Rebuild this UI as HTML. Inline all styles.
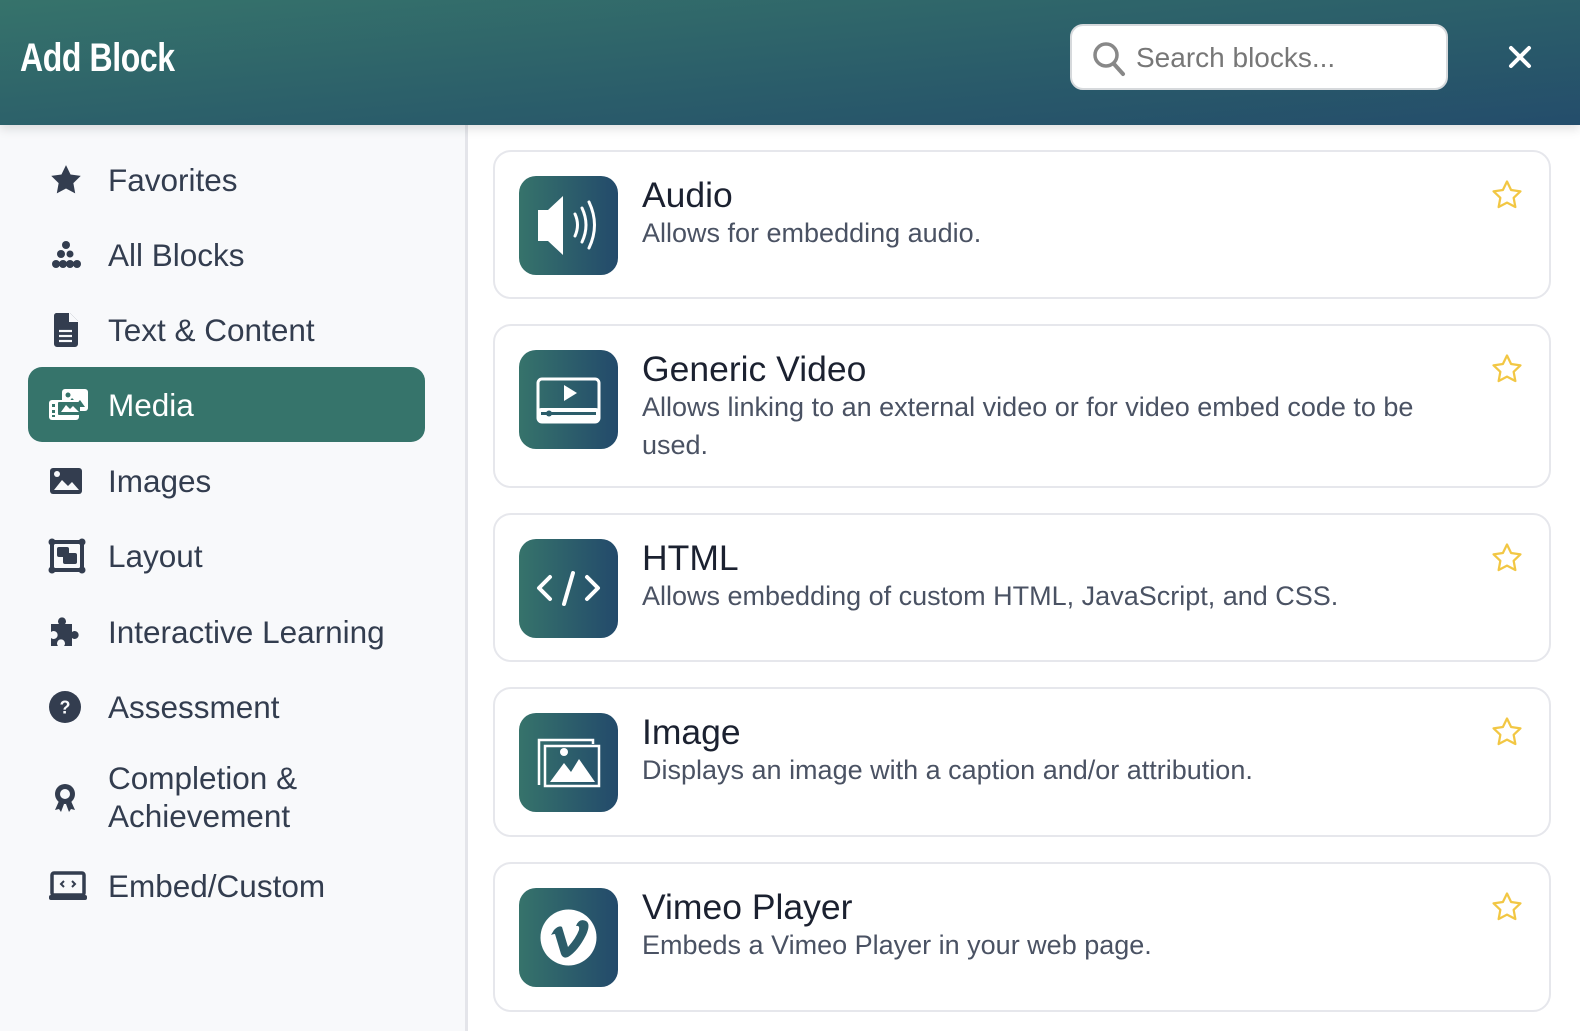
<!DOCTYPE html>
<html><head><meta charset="utf-8"><style>
*{box-sizing:border-box;margin:0;padding:0}
body{width:1580px;height:1031px;overflow:hidden;font-family:"Liberation Sans",sans-serif;background:#fff;position:relative}
.hdr{position:absolute;left:0;top:0;width:1580px;height:125px;background:linear-gradient(175deg,#36736b 0%,#2a5c6a 60%,#244d6b 100%);box-shadow:0 4px 10px rgba(0,0,0,.12);z-index:2}
.hdr h1{position:absolute;left:20px;top:36px;font-weight:bold;font-size:40px;color:#fff;letter-spacing:-0.5px;transform:scaleX(0.8);transform-origin:left;white-space:nowrap}
.search{position:absolute;left:1070px;top:24px;width:378px;height:66px;background:#fff;border:2px solid #d6d9dc;border-radius:13px}
.search span{position:absolute;left:64px;top:16px;font-size:28px;color:#777}
.search svg{position:absolute;left:20px;top:15px}
.close{position:absolute;left:1505px;top:42px}
.side{position:absolute;left:0;top:125px;width:468px;height:906px;background:#f8f9fb;border-right:3px solid #e4e5ea}
.item{position:absolute;left:28px;width:397px;height:75px;color:#333d4f;font-size:31.5px}
.item .t{position:absolute;left:80px;top:50%;transform:translateY(-50%);line-height:38px;white-space:nowrap}
.item svg{position:absolute;left:20px;top:50%;transform:translateY(-50%)}
.item.act{background:#36746b;border-radius:14px;color:#fff}
.card{position:absolute;left:493px;width:1058px;border:2px solid #e6e7ec;border-radius:18px;background:#fff}
.ic{position:absolute;left:24px;top:24px;width:99px;height:99px;border-radius:17px;background:linear-gradient(90deg,#36736b,#234a6b)}
.ic svg{position:absolute;left:0;top:0}
.ttl{position:absolute;left:147px;top:23px;font-size:35.5px;color:#1b2130}
.dsc{position:absolute;left:147px;top:62px;font-size:27px;color:#4a5263;line-height:38px;width:800px}
.star{position:absolute;right:24px;top:26px}
</style></head><body>
<div class="hdr">
<h1>Add Block</h1>
<div class="search"><svg width="34" height="36" viewBox="0 0 34 36"><circle cx="14" cy="14" r="11" fill="none" stroke="#888" stroke-width="3.5"/><line x1="22" y1="23" x2="31" y2="33" stroke="#888" stroke-width="4" stroke-linecap="round"/></svg><span>Search blocks...</span></div>
<svg class="close" width="30" height="30" viewBox="0 0 30 30"><path d="M6 6L24 24M24 6L6 24" stroke="#fff" stroke-width="4" stroke-linecap="round"/></svg>
</div>
<div class="side">
<div class="item" style="top:17px"><svg width="36" height="34" viewBox="0 0 24 24"><path fill="#333d4f" d="M12 1.5l3.2 6.6 7.2 1-5.2 5.1 1.3 7.2L12 18l-6.5 3.4 1.3-7.2L1.6 9.1l7.2-1z"/></svg><span class="t">Favorites</span></div>
<div class="item" style="top:92px"><svg width="36" height="30" viewBox="0 0 30 30"><g fill="#333d4f"><circle cx="15" cy="5" r="4"/><circle cx="10" cy="14" r="4"/><circle cx="19" cy="14" r="3.5"/><circle cx="5" cy="24" r="4"/><circle cx="12" cy="24" r="4"/><circle cx="19" cy="24" r="4"/><circle cx="26" cy="24" r="4"/></g></svg><span class="t">All Blocks</span></div>
<div class="item" style="top:167px"><svg width="36" height="34" viewBox="0 0 36 34"><path fill="#333d4f" d="M8 0h14l8 8v23a3 3 0 0 1-3 3H9a3 3 0 0 1-3-3V3a3 3 0 0 1 2-3z"/><path fill="#f8f9fb" d="M21 0v9h9v-1l-8-8z"/><g stroke="#f8f9fb" stroke-width="2.2"><line x1="11" y1="18" x2="24" y2="18"/><line x1="11" y1="23" x2="24" y2="23"/><line x1="11" y1="28" x2="24" y2="28"/></g></svg><span class="t">Text &amp; Content</span></div>
<div class="item act" style="top:242px"><svg width="42" height="34" viewBox="0 0 42 34"><rect x="14" y="1" width="26" height="22" rx="3" fill="#fff"/><path d="M17 19l7-9 5 5 3-3 5 7z" fill="#36746b"/><circle cx="20" cy="7" r="2.5" fill="#36746b"/><rect x="1" y="12" width="30" height="20" rx="3" fill="#fff"/><g fill="#36746b"><rect x="4" y="16" width="3" height="3"/><rect x="4" y="22" width="3" height="3"/><rect x="4" y="27" width="3" height="2"/><rect x="10" y="14" width="22" height="13" rx="1"/></g><path d="M13 24l5-7 4 4 3-3 6 6z" fill="#fff"/></svg><span class="t">Media</span></div>
<div class="item" style="top:318px"><svg width="36" height="30" viewBox="0 0 36 30"><rect x="2" y="2" width="32" height="26" rx="3" fill="#333d4f"/><path d="M6 24l8-10 6 6 4-4 7 8z" fill="#f8f9fb"/><circle cx="9" cy="8" r="3" fill="#f8f9fb"/></svg><span class="t">Images</span></div>
<div class="item" style="top:393px"><svg width="38" height="36" viewBox="0 0 38 36"><rect x="4" y="4" width="30" height="28" fill="none" stroke="#333d4f" stroke-width="4"/><g fill="#333d4f"><circle cx="4" cy="4" r="3.5"/><circle cx="34" cy="4" r="3.5"/><circle cx="4" cy="32" r="3.5"/><circle cx="34" cy="32" r="3.5"/><rect x="9" y="9" width="12" height="10" rx="2"/><rect x="15" y="15" width="14" height="11" rx="2"/></g></svg><span class="t">Layout</span></div>
<div class="item" style="top:469px"><svg width="36" height="34" viewBox="0 0 36 34"><path fill="#333d4f" d="M3 9h8a4 4 0 1 1 6 0h7v8a4 4 0 1 1 0 6v8h-8a4 4 0 1 0-6 0H3v-8a4 4 0 1 0 0-6z"/></svg><span class="t">Interactive Learning</span></div>
<div class="item" style="top:544px"><svg width="36" height="34" viewBox="0 0 36 34"><circle cx="17" cy="17" r="16" fill="#333d4f"/><text x="17" y="23.5" text-anchor="middle" font-family="Liberation Sans" font-weight="bold" font-size="18" fill="#f8f9fb">?</text></svg><span class="t">Assessment</span></div>
<div class="item" style="top:619px;height:105px"><svg width="36" height="36" viewBox="0 0 36 36"><path fill="#333d4f" d="M11 22l-4 9 4-1 2 3 3-8zM23 22l4 9-4-1-2 3-3-8z"/><circle cx="17" cy="15" r="10" fill="#333d4f"/><circle cx="17" cy="15" r="5" fill="#f8f9fb"/></svg><span class="t">Completion &amp;<br>Achievement</span></div>
<div class="item" style="top:723px"><svg width="40" height="30" viewBox="0 0 40 30"><rect x="4" y="2" width="32" height="22" rx="2" fill="none" stroke="#333d4f" stroke-width="3.5"/><rect x="1" y="24" width="38" height="5" rx="2" fill="#333d4f"/><path d="M16 10l-3 3 3 3M24 10l3 3-3 3" fill="none" stroke="#333d4f" stroke-width="2"/></svg><span class="t">Embed/Custom</span></div>
</div>

<div class="card" style="top:150px;height:149px"><div class="ic"><svg width="99" height="99" viewBox="0 0 99 99"><path d="M19 34h10l15-14v59L29 65H19z" fill="#fff"/><path d="M56 38q5 11 0 22M63 32q8 17 0 34M70 26q11 23 0 46" fill="none" stroke="#fff" stroke-width="3" stroke-linecap="round"/></svg></div><div class="ttl">Audio</div><div class="dsc">Allows for embedding audio.</div><svg class="star" width="36" height="34" viewBox="0 0 24 24"><path fill="none" stroke="#f2c744" stroke-width="1.6" stroke-linejoin="round" d="M12 2.5l2.9 6 6.6.9-4.8 4.6 1.2 6.5L12 17.4l-5.9 3.1 1.2-6.5L2.5 9.4l6.6-.9z"/></svg></div>

<div class="card" style="top:324px;height:164px"><div class="ic"><svg width="99" height="99" viewBox="0 0 99 99"><rect x="19" y="29" width="61" height="43" rx="4" fill="none" stroke="#fff" stroke-width="3"/><rect x="19" y="58" width="61" height="14" rx="3" fill="#fff"/><rect x="22" y="62" width="55" height="3" fill="#2c5d6a"/><circle cx="30" cy="63.5" r="3" fill="#2c5d6a"/><path d="M45 35l13 8-13 8z" fill="#fff"/></svg></div><div class="ttl">Generic Video</div><div class="dsc">Allows linking to an external video or for video embed code to be used.</div><svg class="star" width="36" height="34" viewBox="0 0 24 24"><path fill="none" stroke="#f2c744" stroke-width="1.6" stroke-linejoin="round" d="M12 2.5l2.9 6 6.6.9-4.8 4.6 1.2 6.5L12 17.4l-5.9 3.1 1.2-6.5L2.5 9.4l6.6-.9z"/></svg></div>

<div class="card" style="top:513px;height:149px"><div class="ic"><svg width="99" height="99" viewBox="0 0 99 99"><path d="M31 38l-11 11 11 11M68 38l11 11-11 11M54 34l-9 31" fill="none" stroke="#fff" stroke-width="4" stroke-linecap="round" stroke-linejoin="round"/></svg></div><div class="ttl">HTML</div><div class="dsc" style="width:900px">Allows embedding of custom HTML, JavaScript, and CSS.</div><svg class="star" width="36" height="34" viewBox="0 0 24 24"><path fill="none" stroke="#f2c744" stroke-width="1.6" stroke-linejoin="round" d="M12 2.5l2.9 6 6.6.9-4.8 4.6 1.2 6.5L12 17.4l-5.9 3.1 1.2-6.5L2.5 9.4l6.6-.9z"/></svg></div>

<div class="card" style="top:687px;height:150px"><div class="ic"><svg width="99" height="99" viewBox="0 0 99 99"><path d="M20 72V27h54v4" fill="none" stroke="#fff" stroke-width="2.5"/><rect x="26" y="33" width="54" height="40" fill="none" stroke="#fff" stroke-width="2.5"/><path d="M31 69l14-19 7 9 8-13 16 23z" fill="#fff"/><circle cx="45" cy="39" r="4" fill="#fff"/></svg></div><div class="ttl">Image</div><div class="dsc">Displays an image with a caption and/or attribution.</div><svg class="star" width="36" height="34" viewBox="0 0 24 24"><path fill="none" stroke="#f2c744" stroke-width="1.6" stroke-linejoin="round" d="M12 2.5l2.9 6 6.6.9-4.8 4.6 1.2 6.5L12 17.4l-5.9 3.1 1.2-6.5L2.5 9.4l6.6-.9z"/></svg></div>

<div class="card" style="top:862px;height:150px"><div class="ic"><svg width="99" height="99" viewBox="0 0 99 99"><circle cx="49.5" cy="49.5" r="28" fill="#fff"/><path d="M35 42q5-5 8-3l6 20q8-9 11-17q1-5-3-4q3-8 10-5q5 3 0 14q-8 16-18 22q-5 2-7-3l-6-20q-2 0-4 1z" fill="#2c5d6a"/></svg></div><div class="ttl">Vimeo Player</div><div class="dsc">Embeds a Vimeo Player in your web page.</div><svg class="star" width="36" height="34" viewBox="0 0 24 24"><path fill="none" stroke="#f2c744" stroke-width="1.6" stroke-linejoin="round" d="M12 2.5l2.9 6 6.6.9-4.8 4.6 1.2 6.5L12 17.4l-5.9 3.1 1.2-6.5L2.5 9.4l6.6-.9z"/></svg></div>
</body></html>
